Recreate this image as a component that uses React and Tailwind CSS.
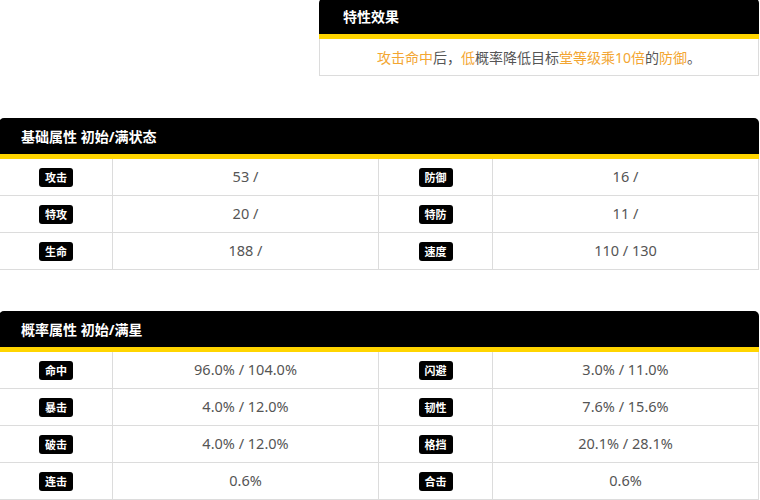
import React from 'react';

const font = { fontFamily: '"Noto Sans", "Noto Sans CJK SC", sans-serif' };

const baseRows = [
    ['攻击', '53 /', '防御', '16 /'],
    ['特攻', '20 /', '特防', '11 /'],
    ['生命', '188 /', '速度', '110 / 130'],
];

const rateRows = [
    ['命中', '96.0% / 104.0%', '闪避', '3.0% / 11.0%'],
    ['暴击', '4.0% / 12.0%', '韧性', '7.6% / 15.6%'],
    ['破击', '4.0% / 12.0%', '格挡', '20.1% / 28.1%'],
    ['连击', '0.6%', '合击', '0.6%'],
];

const Header = ({ title }) => (
    <div className="h-[41px] bg-black rounded-t-[5px] border-b-[5px] border-[#ffd500] flex items-center pl-[22px] text-white text-[14px] font-bold">
        {title}
    </div>
);

const Badge = ({ text }) => (
    <span className="inline-flex items-center justify-center w-[34px] h-[19px] rounded-[3px] bg-black text-white text-[11px] font-bold leading-none">
        {text}
    </span>
);

const StatTable = ({ title, rows }) => (
    <div className="-ml-px">
        <Header title={title} />
        <div className="border-x border-[#dcdcdc]">
            {rows.map((r, i) => (
                <div key={i} className="grid grid-cols-[113px_266px_114px_1fr] h-[37px] border-b border-[#dcdcdc]">
                    <div className="flex items-center justify-center border-r border-[#dcdcdc]">
                        <Badge text={r[0]} />
                    </div>
                    <div className="flex items-center justify-center border-r border-[#dcdcdc] text-[14.5px] text-[#555]">
                        {r[1]}
                    </div>
                    <div className="flex items-center justify-center border-r border-[#dcdcdc]">
                        <Badge text={r[2]} />
                    </div>
                    <div className="flex items-center justify-center text-[14.5px] text-[#555]">
                        {r[3]}
                    </div>
                </div>
            ))}
        </div>
    </div>
);

const Hl = ({ children }) => <span className="text-[#f3a632]">{children}</span>;

export default function App() {
    return (
        <div className="w-[760px] h-[500px] overflow-hidden bg-white pr-px" style={font}>
            <div className="flex justify-end -mt-[2px]">
                <div className="w-[440px]">
                    <div className="h-[41px] bg-black rounded-t-[5px] border-b-[5px] border-[#ffd500] flex items-center pl-[24px] text-white text-[14px] font-bold">
                        特性效果
                    </div>
                    <div className="h-[37px] border-x border-b border-[#dcdcdc] flex items-center justify-center text-[14px] text-[#555]">
                        <span>
                            <Hl>攻击命中</Hl>后，<Hl>低</Hl>概率降低目标<Hl>堂等级乘10倍</Hl>的<Hl>防御</Hl>。
                        </span>
                    </div>
                </div>
            </div>
            <div className="mt-[42px]">
                <StatTable title="基础属性 初始/满状态" rows={baseRows} />
            </div>
            <div className="mt-[41px]">
                <StatTable title="概率属性 初始/满星" rows={rateRows} />
            </div>
        </div>
    );
}
